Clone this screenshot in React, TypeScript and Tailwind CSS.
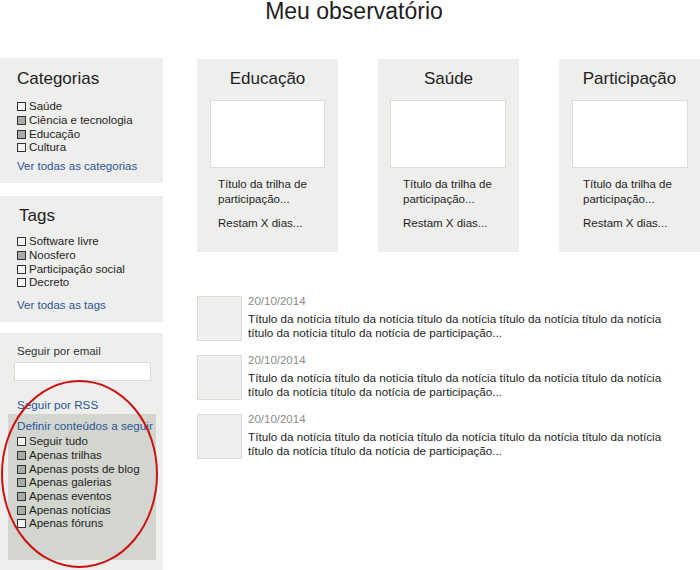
const categorias = [
  { label: "Saúde", on: false },
  { label: "Ciência e tecnologia", on: true },
  { label: "Educação", on: true },
  { label: "Cultura", on: false },
];

const tags = [
  { label: "Software livre", on: false },
  { label: "Noosfero", on: true },
  { label: "Participação social", on: false },
  { label: "Decreto", on: false },
];

const seguir = [
  { label: "Seguir tudo", on: false },
  { label: "Apenas trilhas", on: true },
  { label: "Apenas posts de blog", on: true },
  { label: "Apenas galerias", on: true },
  { label: "Apenas eventos", on: true },
  { label: "Apenas notícias", on: true },
  { label: "Apenas fóruns", on: false },
];

const trilhas = [
  { title: "Educação", pad: "pl-[21px]", img: "ml-[13px] w-[115px]" },
  { title: "Saúde", pad: "pl-[25px]", img: "ml-[12px] w-[116px]" },
  { title: "Participação", pad: "pl-[24px]", img: "ml-[13px] w-[116px]" },
];

function Check({ label, on }: { label: string; on: boolean }) {
  return (
    <div className="flex items-center h-[13.7px]">
      <span
        className={
          "w-[9px] h-[9px] border border-[#2e3436] mr-[3px] " +
          (on ? "bg-[#a9aba5]" : "bg-[#f4f4f2]")
        }
      />
      <span>{label}</span>
    </div>
  );
}

function News() {
  return (
    <div className="flex items-start">
      <div className="w-[45px] h-[45px] mt-[2px] bg-[#eeeeec] border border-[#dcdcd7] shrink-0" />
      <div className="ml-[6px] w-[432px]">
        <div className="text-[11.5px] leading-[14px] text-[#8a8c87]">20/10/2014</div>
        <div className="mt-[4px] text-[11.7px] leading-[14px] text-[#1e1e1e]">
          Título da notícia título da notícia título da notícia título da notícia título da notícia
          título da notícia título da notícia de participação...
        </div>
      </div>
    </div>
  );
}

export default function App() {
  return (
    <div className="w-[700px] h-[570px] overflow-hidden bg-white font-['Liberation_Sans',Arial,sans-serif] text-[#1e1e1e]">
      <h1 className="text-center pl-[8px] text-[23px] leading-[22px] font-normal">Meu observatório</h1>
      <div className="flex mt-[36px]">
        {/* sidebar */}
        <div className="w-[163px] shrink-0 flex flex-col text-[11.5px]">
          <div className="bg-[#eeeeec] pl-[17px] pt-[11px] h-[125px]">
            <div className="text-[17px] leading-[20px]">Categorias</div>
            <div className="mt-[11px]">
              {categorias.map((c) => (
                <Check key={c.label} {...c} />
              ))}
            </div>
            <div className="mt-[4px] leading-[14px] text-[#2a5595]">Ver todas as categorias</div>
          </div>

          <div className="bg-[#eeeeec] pl-[17px] pt-[10px] mt-[13px] h-[126px]">
            <div className="text-[17px] leading-[20px] pl-[2px]">Tags</div>
            <div className="mt-[9px]">
              {tags.map((c) => (
                <Check key={c.label} {...c} />
              ))}
            </div>
            <div className="mt-[8px] leading-[14px] text-[#2a5595]">Ver todas as tags</div>
          </div>

          <div className="relative bg-[#eeeeec] pt-[11px] mt-[11px] pb-[12px]">
            <div className="pl-[17px] leading-[14px] text-[#2e3436]">Seguir por email</div>
            <div className="ml-[14px] mt-[4px] w-[137px] h-[19px] bg-white border border-[#dcdcd7]" />
            <div className="pl-[17px] mt-[17px] leading-[14px] text-[11.7px] text-[#2a5595]">Seguir por RSS</div>
            <div className="ml-[8px] mr-[7px] mt-[2px] bg-[#d3d5cf] pl-[9px] pt-[5px] h-[146px]">
              <div className="leading-[14px] text-[11.7px] text-[#2a5595]">Definir conteúdos a seguir</div>
              <div className="mt-[2px]">
                {seguir.map((c) => (
                  <Check key={c.label} {...c} />
                ))}
              </div>
            </div>
            {/* annotation circle */}
            <svg
              className="absolute left-0 top-[46px] pointer-events-none"
              width="163"
              height="190"
              viewBox="0 0 163 190"
            >
              <ellipse cx="79.5" cy="95" rx="77.5" ry="93" fill="none" stroke="#cc1111" strokeWidth="2" />
            </svg>
          </div>
        </div>

        {/* main */}
        <div className="ml-[34px] pt-[1px] flex-1 overflow-hidden">
          <div className="flex gap-[40px]">
            {trilhas.map((t) => (
              <div key={t.title} className="w-[141px] h-[193px] shrink-0 bg-[#eeeeec] pt-[10px]">
                <div className="text-center text-[17px] leading-[20px]">{t.title}</div>
                <div className={"mt-[11px] h-[68px] bg-white border border-[#dcdcd7] " + t.img} />
                <div className={"mt-[9px] text-[11.5px] leading-[15px] " + t.pad}>
                  Título da trilha de
                  <br />
                  participação...
                </div>
                <div className={"mt-[9px] text-[11.5px] leading-[15px] " + t.pad}>Restam X dias...</div>
              </div>
            ))}
          </div>

          <div className="mt-[42px] flex flex-col gap-[12px]">
            <News />
            <News />
            <News />
          </div>
        </div>
      </div>
    </div>
  );
}
